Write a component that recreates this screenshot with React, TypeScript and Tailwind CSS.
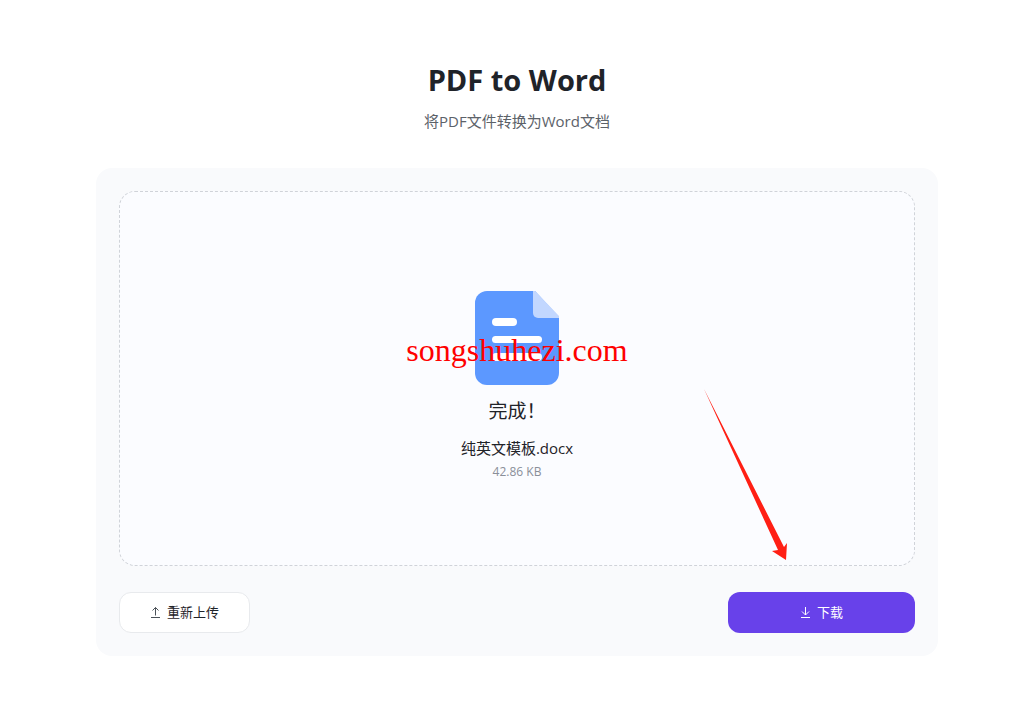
import { useState } from "react";

const DocumentIcon = () => (
  <svg width="84" height="94" viewBox="0 0 84 94" fill="none" aria-hidden="true">
    <path
      d="M12 0H60L84 26V82A12 12 0 0 1 72 94H12A12 12 0 0 1 0 82V12A12 12 0 0 1 12 0Z"
      fill="#5c98ff"
    />
    <path d="M58 0H60L84 25V27H63A5 5 0 0 1 58 22Z" fill="#c2d7ff" />
    <rect x="17" y="27" width="25" height="8" rx="4" fill="#fff" />
    <rect x="17" y="45" width="50" height="7" rx="3.5" fill="#fff" />
    <rect x="17" y="62" width="50" height="8" rx="4" fill="#fff" />
  </svg>
);

const UploadIcon = () => (
  <svg width="11" height="14" viewBox="0 0 11 14" fill="none" stroke="#4b5158" aria-hidden="true">
    <path d="M1 11.5H10M5.5 9.5V1.5M2.5 4.5L5.5 1.5L8.5 4.5" />
  </svg>
);

const DownloadIcon = () => (
  <svg width="11" height="14" viewBox="0 0 11 14" fill="none" stroke="#fff" aria-hidden="true">
    <path d="M1 11.5H10M5.5 1V9M2 5.5L5.5 9L9 5.5" />
  </svg>
);

const App = () => {
  const [file] = useState({ name: "纯英文模板.docx", size: "42.86 KB" });

  return (
    <main className="min-h-screen bg-white pl-24 pr-[94px] py-[60px] font-['Open_Sans','Noto_Sans_CJK_SC',sans-serif] text-[#1f2329]">
      {/* Title */}
      <header className="text-center">
        <h1 className="text-[29px] leading-10 font-bold">PDF to Word</h1>
        <p className="mt-2.5 text-[15px] leading-[22px] text-[#5c6269]">
          将PDF文件转换为Word文档
        </p>
      </header>

      {/* Converter card */}
      <section className="mt-9 rounded-2xl bg-[#f9fafc] p-[23px]">
        <div className="relative flex h-[375px] flex-col items-center rounded-2xl border border-dashed border-[#d0d3d9] bg-[#fbfcff] pt-[99px] text-center">
          <DocumentIcon />
          <h2 className="mt-3 text-[19px] leading-7">完成！</h2>
          <p className="mt-3 text-[15px] leading-[22px]">{file.name}</p>
          <p className="text-xs leading-[26px] text-[#8a8f99]">{file.size}</p>

          {/* Watermark */}
          <span className="pointer-events-none absolute inset-x-0 top-[138px] font-['Liberation_Serif',serif] text-[32px] leading-10 text-[#ff0000]">
            songshuhezi.com
          </span>

          {/* Arrow pointing at the download button */}
          <svg
            className="pointer-events-none absolute right-[127px] bottom-[5px]"
            width="85"
            height="171"
            viewBox="0 0 85 171"
            aria-hidden="true"
          >
            <path d="M2 0L82 158L85 154L84 171L70 162L76 161Z" fill="#ff1f14" />
          </svg>
        </div>

        {/* Actions */}
        <div className="mt-[26px] flex items-center justify-between">
          <button
            type="button"
            className="flex h-[41px] w-[131px] items-center justify-center gap-1.5 rounded-xl border border-[#e8eaed] bg-white text-[13px]"
          >
            <UploadIcon />
            重新上传
          </button>
          <button
            type="button"
            className="flex h-[41px] w-[187px] items-center justify-center gap-1.5 rounded-xl bg-[#6841ea] text-[13px] text-white"
          >
            <DownloadIcon />
            下载
          </button>
        </div>
      </section>
    </main>
  );
};

export default App;
